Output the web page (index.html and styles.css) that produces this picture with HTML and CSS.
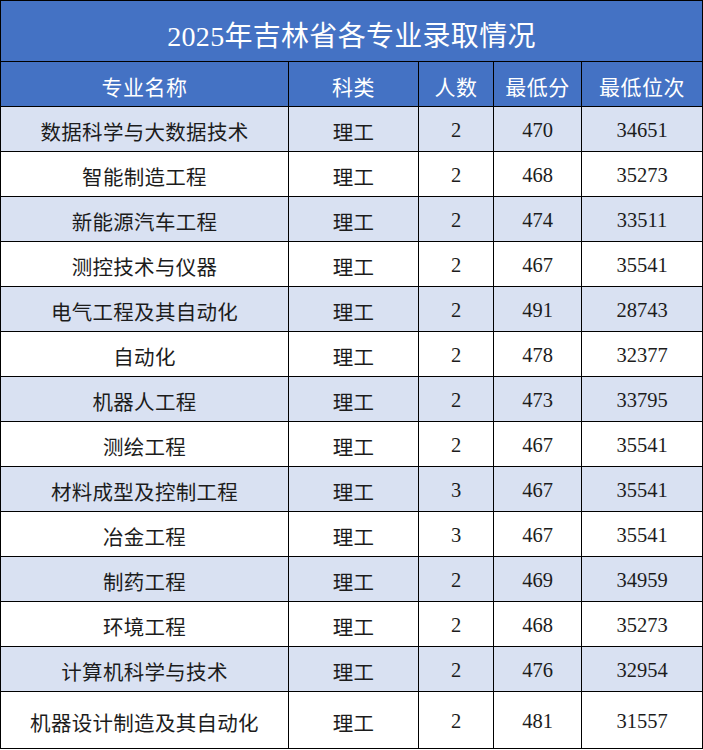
FILE: index.html
```html
<!DOCTYPE html>
<html lang="zh-CN">
<head>
<meta charset="utf-8">
<title>2025年吉林省各专业录取情况</title>
<link rel="stylesheet" href="styles.css">
</head>
<body>
<table class="score-table">
  <colgroup>
    <col class="c-name"><col class="c-type"><col class="c-num"><col class="c-min"><col class="c-rank">
  </colgroup>
  <thead>
    <tr class="title-row"><th colspan="5">2025年吉林省各专业录取情况</th></tr>
    <tr class="head-row"><th>专业名称</th><th>科类</th><th>人数</th><th>最低分</th><th>最低位次</th></tr>
  </thead>
  <tbody>
    <tr class="alt"><td>数据科学与大数据技术</td><td>理工</td><td class="n">2</td><td class="n">470</td><td class="n">34651</td></tr>
    <tr><td>智能制造工程</td><td>理工</td><td class="n">2</td><td class="n">468</td><td class="n">35273</td></tr>
    <tr class="alt"><td>新能源汽车工程</td><td>理工</td><td class="n">2</td><td class="n">474</td><td class="n">33511</td></tr>
    <tr><td>测控技术与仪器</td><td>理工</td><td class="n">2</td><td class="n">467</td><td class="n">35541</td></tr>
    <tr class="alt"><td>电气工程及其自动化</td><td>理工</td><td class="n">2</td><td class="n">491</td><td class="n">28743</td></tr>
    <tr><td>自动化</td><td>理工</td><td class="n">2</td><td class="n">478</td><td class="n">32377</td></tr>
    <tr class="alt"><td>机器人工程</td><td>理工</td><td class="n">2</td><td class="n">473</td><td class="n">33795</td></tr>
    <tr><td>测绘工程</td><td>理工</td><td class="n">2</td><td class="n">467</td><td class="n">35541</td></tr>
    <tr class="alt"><td>材料成型及控制工程</td><td>理工</td><td class="n">3</td><td class="n">467</td><td class="n">35541</td></tr>
    <tr><td>冶金工程</td><td>理工</td><td class="n">3</td><td class="n">467</td><td class="n">35541</td></tr>
    <tr class="alt"><td>制药工程</td><td>理工</td><td class="n">2</td><td class="n">469</td><td class="n">34959</td></tr>
    <tr><td>环境工程</td><td>理工</td><td class="n">2</td><td class="n">468</td><td class="n">35273</td></tr>
    <tr class="alt"><td>计算机科学与技术</td><td>理工</td><td class="n">2</td><td class="n">476</td><td class="n">32954</td></tr>
    <tr class="last"><td>机器设计制造及其自动化</td><td>理工</td><td class="n">2</td><td class="n">481</td><td class="n">31557</td></tr>
  </tbody>
</table>
</body>
</html>
```
FILE: styles.css
```css
html, body {
  margin: 0;
  padding: 0;
  background: #ffffff;
}

.score-table {
  border-collapse: collapse;
  table-layout: fixed;
  width: 702px;
  font-family: "Liberation Serif", "Noto Sans CJK SC", serif;
  color: #1c1c1c;
}

.c-name { width: 288px; }
.c-type { width: 130px; }
.c-num { width: 75px; }
.c-min { width: 88px; }
.c-rank { width: 121px; }

.score-table th,
.score-table td {
  border: 1px solid #000000;
  padding: 3px 0 0 0;
  text-align: center;
  vertical-align: middle;
  white-space: nowrap;
  overflow: hidden;
}

.score-table td {
  font-size: 20.5px;
  font-weight: normal;
  height: 41px;
  letter-spacing: 0.3px;
}

.score-table td.n {
  font-size: 20.5px;
  letter-spacing: 0;
}

.title-row th {
  height: 54px;
  background: #4472c4;
  color: #ffffff;
  font-size: 28px;
  font-weight: normal;
  letter-spacing: 0.3px;
  padding-top: 6px;
}

.head-row th {
  height: 41px;
  background: #4472c4;
  color: #ffffff;
  font-size: 21px;
  font-weight: normal;
  letter-spacing: 0.5px;
}

tr.alt td {
  background: #d9e1f2;
}

tr.last td {
  height: 53px;
}
```
